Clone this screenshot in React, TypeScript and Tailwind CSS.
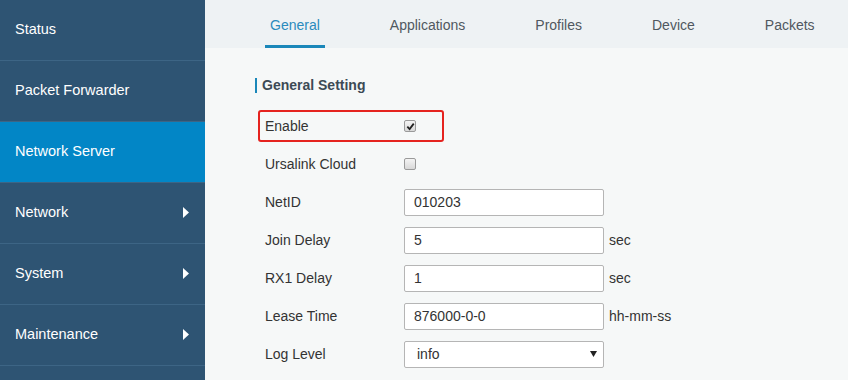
import React from "react";

const font = { fontFamily: '"Liberation Sans", Arial, sans-serif' };

/* ── Sidebar ─────────────────────────────────────────────── */
const menu = [
  { label: "Status" },
  { label: "Packet Forwarder" },
  { label: "Network Server", active: true },
  { label: "Network", sub: true },
  { label: "System", sub: true },
  { label: "Maintenance", sub: true },
  { label: "" },
];

function Sidebar() {
  return (
    <div className="flex w-[205px] shrink-0 flex-col bg-[#2e5473]">
      {menu.map((m, i) => (
        <div
          key={i}
          className={`flex h-[61px] shrink-0 items-center justify-between border-b border-[#3d6585] pl-[15px] pr-[16px] text-[14.5px] text-white ${
            m.active ? "bg-[#0286c6]" : ""
          }`}
        >
          <span>{m.label}</span>
          {m.sub && (
            <svg width="6" height="11" viewBox="0 0 6 11" className="-mt-[1px]">
              <path d="M0 0 L6 5.5 L0 11 Z" fill="#fff" />
            </svg>
          )}
        </div>
      ))}
    </div>
  );
}

/* ── Tabs ────────────────────────────────────────────────── */
const tabs = ["General", "Applications", "Profiles", "Device", "Packets"];

function Tabs() {
  return (
    <div className="flex h-[48px] shrink-0 items-stretch gap-[60px] bg-[#eef2f4] pl-[60px]">
      {tabs.map((t, i) => (
        <div
          key={t}
          className={`flex items-center border-b-[3px] px-[5px] pt-[5px] text-[14px] ${
            i === 0 ? "border-[#1a87b9] text-[#2b8bbd]" : "border-transparent text-[#50585f]"
          }`}
        >
          {t}
        </div>
      ))}
    </div>
  );
}

/* ── Form bits ───────────────────────────────────────────── */
function Checkbox({ checked }: { checked?: boolean }) {
  return (
    <span className="flex h-[12px] w-[12px] items-center justify-center rounded-[2px] border border-[#9a9a9a] bg-gradient-to-b from-[#f4f4f4] to-[#d8d8d8]">
      {checked && (
        <svg width="9" height="9" viewBox="0 0 10 10">
          <path d="M1.5 5.2 L4 7.8 L8.6 1.8" stroke="#222" strokeWidth="2" fill="none" />
        </svg>
      )}
    </span>
  );
}

function Input({ value }: { value: string }) {
  return (
    <div className="flex h-[27px] w-[200px] items-center rounded-[2px] border border-[#b5b5b5] bg-white pl-[9px] text-[14px] text-[#333]">
      {value}
    </div>
  );
}

function Row({ label, children, unit }: { label: string; children: React.ReactNode; unit?: string }) {
  return (
    <div className="flex h-[38px] items-center pl-[10px] text-[14px] text-[#333]">
      <div className="w-[139px] shrink-0">{label}</div>
      {children}
      {unit && <span className="ml-[5px]">{unit}</span>}
    </div>
  );
}

export default function App() {
  return (
    <div className="flex h-[380px] w-[848px] overflow-hidden bg-[#f6f8f8]" style={font}>
      <Sidebar />
      <div className="flex flex-1 flex-col">
        <Tabs />
        <div className="pl-[50px] pt-[27px]">
          <div className="flex h-[20px] items-center gap-[5px]">
            <span className="h-[15px] w-[2px] bg-[#1a87b9]" />
            <span className="text-[14px] font-bold text-[#3c4a55]">General Setting</span>
          </div>
          <div className="mt-[12px]">
            <div className="relative">
              <Row label="Enable">
                <Checkbox checked />
              </Row>
              <div className="absolute left-[3px] top-[3px] h-[32px] w-[186px] rounded-[3px] border-2 border-[#e5231f]" />
            </div>
            <Row label="Ursalink Cloud">
              <Checkbox />
            </Row>
            <Row label="NetID">
              <Input value="010203" />
            </Row>
            <Row label="Join Delay" unit="sec">
              <Input value="5" />
            </Row>
            <Row label="RX1 Delay" unit="sec">
              <Input value="1" />
            </Row>
            <Row label="Lease Time" unit="hh-mm-ss">
              <Input value="876000-0-0" />
            </Row>
            <Row label="Log Level">
              <div className="flex h-[27px] w-[200px] items-center justify-between rounded-[2px] border border-[#b5b5b5] bg-white pl-[12px] pr-[6px] text-[14px] text-[#333]">
                <span>info</span>
                <svg width="7" height="6" viewBox="0 0 7 6">
                  <path d="M0 0 H7 L3.5 6 Z" fill="#222" />
                </svg>
              </div>
            </Row>
          </div>
        </div>
      </div>
    </div>
  );
}
